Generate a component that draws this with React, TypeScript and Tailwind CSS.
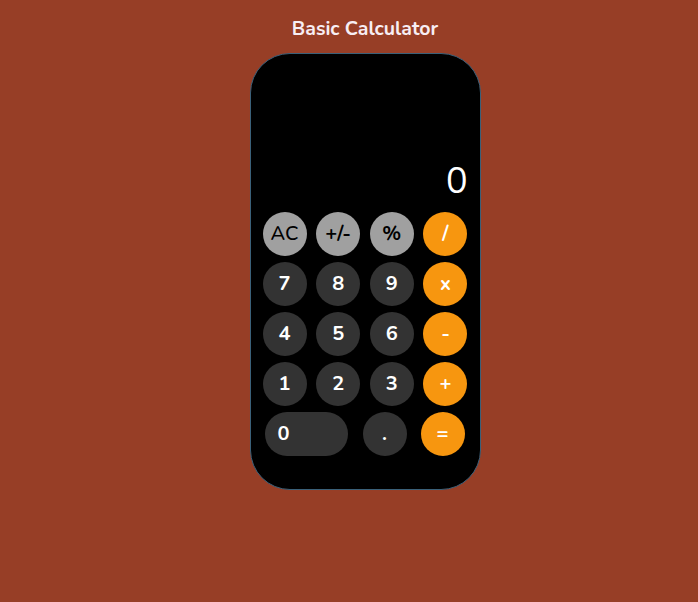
import React from "react";

const font = { fontFamily: "Nunito, Lato, 'Open Sans', sans-serif" };

export default function App() {
  const gray = "bg-[#a0a0a0] text-black";
  const dark = "bg-[#333333] text-white";
  const orange = "bg-[#f7960f] text-white";
  const rows: { l: string; c: string; w?: string }[][] = [
    [{ l: "AC", c: gray, w: "font-medium" }, { l: "+/-", c: gray }, { l: "%", c: gray }, { l: "/", c: orange }],
    [{ l: "7", c: dark }, { l: "8", c: dark }, { l: "9", c: dark }, { l: "x", c: orange }],
    [{ l: "4", c: dark }, { l: "5", c: dark }, { l: "6", c: dark }, { l: "-", c: orange }],
    [{ l: "1", c: dark }, { l: "2", c: dark }, { l: "3", c: dark }, { l: "+", c: orange }],
  ];
  return (
    <div className="min-h-[602px] w-full bg-[#973e26] flex flex-col items-center pl-8" style={font}>
      <h1 className="mt-[17px] text-[19.5px] font-bold text-[#f7eef4] leading-[24px]">Basic Calculator</h1>
      <div className="mt-[12px] w-[231px] h-[437px] bg-black rounded-[40px] border border-[#3a6079] flex flex-col">
        <div className="h-[158px] flex items-end justify-end pr-[12px] pb-[12px]">
          <span className="text-[36px] leading-none text-white font-normal">0</span>
        </div>
        <div className="flex flex-col gap-[6px] px-[12px]">
          {rows.map((r, i) => (
            <div key={i} className="flex justify-between">
              {r.map((b) => (
                <button
                  key={b.l}
                  className={`w-[44px] h-[44px] rounded-full flex items-center justify-center text-[20px] ${b.w ?? "font-bold"} ${b.c}`}
                >
                  {b.l}
                </button>
              ))}
            </div>
          ))}
          <div className="flex items-center pl-[2px] pr-[2px]">
            <button className={`w-[83px] h-[44px] rounded-full flex items-center pl-[13px] text-[20px] font-bold ${dark}`}>0</button>
            <button className={`ml-[15px] w-[44px] h-[44px] rounded-full flex items-center justify-center text-[20px] font-bold ${dark}`}>.</button>
            <button className={`ml-[14px] w-[44px] h-[44px] rounded-full flex items-center justify-center text-[20px] font-bold ${orange}`}>=</button>
          </div>
        </div>
      </div>
    </div>
  );
}
